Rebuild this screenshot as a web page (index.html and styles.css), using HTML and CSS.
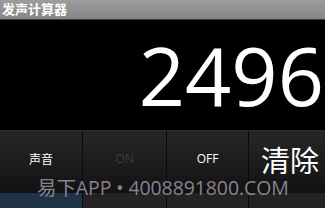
FILE: index.html
```html
<!DOCTYPE html>
<html>
<head>
<meta charset="utf-8">
<link rel="stylesheet" href="styles.css">
</head>
<body>
<div class="app">
  <div class="titlebar">发声计算器</div>
  <div class="display"><span class="num">2496</span></div>
  <div class="keys">
    <div class="key"><span class="small">声音</span></div>
    <div class="key"><span class="small dim">ON</span></div>
    <div class="key"><span class="small">OFF</span></div>
    <div class="key"><span class="big">清除</span></div>
  </div>
  <div class="keys row2">
    <div class="key blue"></div>
    <div class="key"></div>
    <div class="key"></div>
    <div class="key"></div>
  </div>
  <div class="watermark">易下APP • 4008891800.COM</div>
</div>
</body>
</html>
```
FILE: styles.css
```css
html, body {
  margin: 0;
  padding: 0;
  background: #000;
}
.app {
  position: relative;
  width: 325px;
  height: 208px;
  overflow: hidden;
  font-family: "Open Sans", "Noto Sans CJK SC", sans-serif;
}
.titlebar {
  height: 19px;
  border-bottom: 1px solid #3c3c3c;
  background: linear-gradient(#9d9d9d, #858585);
  color: #fff;
  font-weight: bold;
  font-size: 13px;
  line-height: 19px;
  padding-left: 2px;
}
.display {
  height: 110px;
  display: flex;
  align-items: center;
  justify-content: flex-end;
}
.num {
  color: #fff;
  font-family: "Open Sans", sans-serif;
  font-size: 81px;
  line-height: 1;
  margin-top: -2px;
  padding-right: 1px;
}
.keys {
  display: grid;
  grid-template-columns: 82px 83px 81px 1fr;
  column-gap: 1px;
  height: 61px;
  background: #0a0a0a;
  border-top: 1px solid #2c2c2c;
}
.key {
  background: linear-gradient(#272727, #121212);
  display: flex;
  align-items: center;
  justify-content: center;
  padding-bottom: 6px;
}
.row2 {
  height: 16px;
  border-top: 1px solid #111;
}
.row2 .key {
  background: #232323;
}
.row2 .key.blue {
  background: #1f3347;
}
.small {
  color: #fff;
  font-size: 12px;
}
.dim {
  color: #3c3c3c;
}
.big {
  color: #fff;
  font-size: 29px;
  margin-left: 6px;
}
.watermark {
  position: absolute;
  left: 37px;
  top: 172px;
  color: #8c8192;
  font-size: 19.5px;
  letter-spacing: -0.1px;
  white-space: nowrap;
}
```
